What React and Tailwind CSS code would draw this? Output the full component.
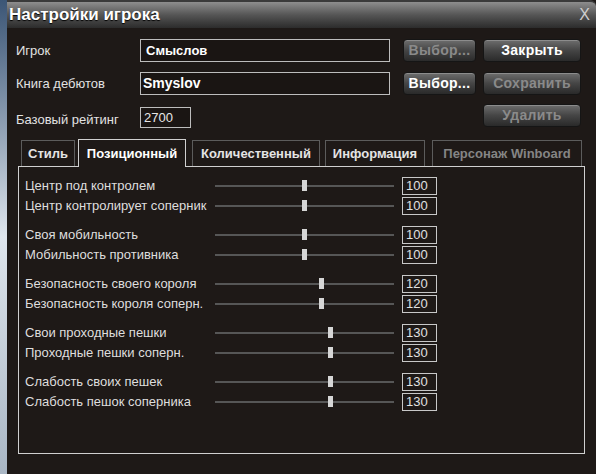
import React from "react";

const groups = [
  [
    ["Центр под контролем", 100],
    ["Центр контролирует соперник", 100],
  ],
  [
    ["Своя мобильность", 100],
    ["Мобильность противника", 100],
  ],
  [
    ["Безопасность своего короля", 120],
    ["Безопасность короля соперн.", 120],
  ],
  [
    ["Свои проходные пешки", 130],
    ["Проходные пешки соперн.", 130],
  ],
  [
    ["Слабость своих пешек", 130],
    ["Слабость пешок соперника", 130],
  ],
];

function Button({ children, disabled, width }) {
  return (
    <div
      className={`${width} h-[23px] flex items-center justify-center rounded-[4px] border border-[#151515] bg-linear-to-b from-[#6e6e6e] via-[#454545] to-[#2a2a2a] shadow-[inset_0_1px_0_#8c8c8c] text-[14px] font-bold tracking-[0.3px] ${
        disabled ? "text-[#8a8a8a]" : "text-white"
      }`}
    >
      {children}
    </div>
  );
}

function Slider({ value }) {
  const left = (value / 200) * (179 - 5);
  return (
    <div className="relative w-[179px] h-[18px] flex items-center">
      <div className="w-full h-[2px] bg-[#565656]" />
      <div
        className="absolute top-[3px] w-[5px] h-[11px] bg-[#d6d6d6]"
        style={{ left }}
      />
    </div>
  );
}

function Tab({ children, active, disabled, width, ml }) {
  if (active) {
    return (
      <div
        className={`${width} ${ml} relative z-10 -mb-px h-[28px] flex items-center justify-center border border-b-0 border-[#d0d0d0] bg-[#1e1917] text-[13px] font-bold text-white`}
      >
        {children}
      </div>
    );
  }
  return (
    <div
      className={`${width} ${ml} h-[26px] flex items-center justify-center border border-b-0 border-[#5c5c5c] text-[13px] font-bold ${
        disabled ? "text-[#858585]" : "text-[#e4e4e4]"
      }`}
    >
      {children}
    </div>
  );
}

export default function App() {
  return (
    <div className="flex h-[474px] w-[596px] overflow-hidden bg-[#1e1917] font-['Liberation_Sans',Arial,sans-serif]">
      <div className="w-[7px] h-full bg-linear-to-b from-[#3c5676] via-[#dfe5ec] to-[#a9b6c4]" />
      <div className="flex-1 flex flex-col bg-[#1e1917]">
        <div className="h-[28px] flex items-center justify-between rounded-tr-[6px] border-t-2 border-[#3a3a3a] bg-linear-to-b from-[#8e8e8e] via-[#555555] to-[#2c2c2c] pl-[2px] pr-[6px]">
          <span className="text-[17px] font-bold text-white [text-shadow:0_1px_1px_#000]">
            Настройки игрока
          </span>
          <span className="text-[16px] text-[#cfcfcf]">X</span>
        </div>

        <div className="flex items-center mt-[11px] h-[23px]">
          <div className="w-[133px] pl-[9px] text-[13px] text-[#e2e2e2]">Игрок</div>
          <div className="w-[250px] h-[23px] border border-[#bdbdbd] bg-[#1a1513] flex items-center pl-[5px] text-[13px] font-bold text-white">
            Смыслов
          </div>
          <div className="ml-[13px]">
            <Button disabled width="w-[73px]">Выбор...</Button>
          </div>
          <div className="ml-[7px]">
            <Button width="w-[98px]">Закрыть</Button>
          </div>
        </div>

        <div className="flex items-center mt-[10px] h-[23px]">
          <div className="w-[133px] pl-[9px] text-[13px] text-[#e2e2e2]">Книга дебютов</div>
          <div className="w-[250px] h-[23px] border border-[#bdbdbd] bg-[#1a1513] flex items-center pl-[2px] text-[14px] font-bold text-white">
            Smyslov
          </div>
          <div className="ml-[13px]">
            <Button width="w-[73px]">Выбор...</Button>
          </div>
          <div className="ml-[7px]">
            <Button disabled width="w-[98px]">Сохранить</Button>
          </div>
        </div>

        <div className="flex items-start mt-[9px] h-[23px]">
          <div className="w-[133px] pl-[9px] mt-[6px] text-[13px] text-[#e2e2e2]">Базовый рейтинг</div>
          <div className="w-[51px] h-[21px] mt-[3px] border border-[#bdbdbd] bg-[#1a1513] flex items-center pl-[3px] text-[13px] text-[#e6e6e6]">
            2700
          </div>
          <div className="ml-[292px]">
            <Button disabled width="w-[98px]">Удалить</Button>
          </div>
        </div>

        <div className="ml-[11px] mt-[12px] w-[567px]">
          <div className="flex items-end h-[27px]">
            <Tab width="w-[54px]" ml="ml-[3px]">Стиль</Tab>
            <Tab active width="w-[108px]" ml="ml-[3px]">Позиционный</Tab>
            <Tab width="w-[128px]" ml="ml-[6px]">Количественный</Tab>
            <Tab width="w-[100px]" ml="ml-[5px]">Информация</Tab>
            <Tab disabled width="w-[150px]" ml="ml-[7px]">Персонаж Winboard</Tab>
          </div>
          <div className="h-[288px] border border-[#d0d0d0] pt-[10px] pl-[6px] flex flex-col gap-[11px]">
            {groups.map((group, gi) => (
              <div key={gi} className="flex flex-col gap-[2px]">
                {group.map(([label, value]) => (
                  <div key={label} className="flex items-center h-[18px]">
                    <div className="w-[190px] text-[13px] text-[#dedede] whitespace-nowrap">
                      {label}
                    </div>
                    <Slider value={value} />
                    <div className="ml-[8px] w-[35px] h-[18px] border border-[#c8c8c8] flex items-center pl-[3px] text-[13px] text-[#e0e0e0]">
                      {value}
                    </div>
                  </div>
                ))}
              </div>
            ))}
          </div>
        </div>
      </div>
    </div>
  );
}
